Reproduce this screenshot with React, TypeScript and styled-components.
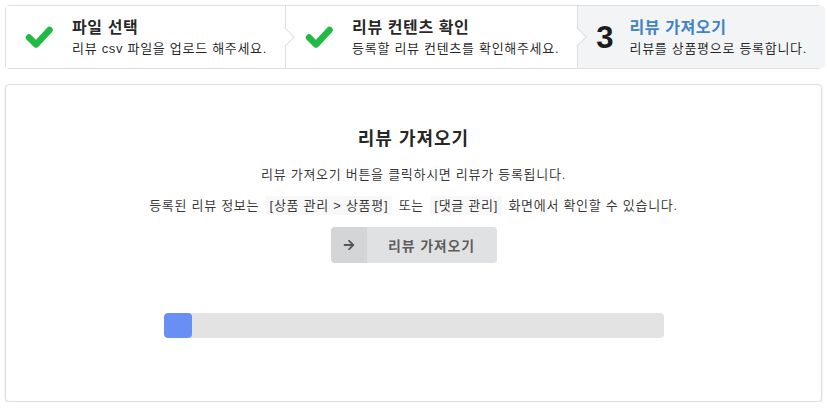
import React from 'react';
import styled, { createGlobalStyle } from 'styled-components';
import { FaArrowRight } from 'react-icons/fa';

const GlobalStyle = createGlobalStyle`
  html, body {
    margin: 0;
    padding: 0;
    background: #ffffff;
  }
  body {
    font-family: "Liberation Sans", "Noto Sans CJK KR", sans-serif;
    font-size: 13px;
    color: rgba(0, 0, 0, 0.87);
  }
`;

const Page = styled.div`
  padding: 5px 5px 0 5px;
  display: flex;
  flex-direction: column;
  gap: 15px;
`;

const Steps = styled.div`
  display: flex;
  height: 64px;
  box-sizing: border-box;
  border: 1px solid rgba(34, 36, 38, 0.15);
  border-radius: 4px;
`;

const Step = styled.div<{ active?: boolean; last?: boolean }>`
  position: relative;
  flex: 1 0 auto;
  display: flex;
  align-items: center;
  justify-content: center;
  gap: 18px;
  padding: 0 18px;
  background: ${p => (p.active ? '#f3f4f5' : '#ffffff')};
  border-right: ${p => (p.last ? 'none' : '1px solid rgba(34, 36, 38, 0.15)')};
  border-radius: ${p => (p.last ? '0 3px 3px 0' : '0')};

  ${p => !p.last && `
    &::after {
      content: '';
      position: absolute;
      z-index: 2;
      top: 50%;
      right: 0;
      width: 13px;
      height: 13px;
      background: #ffffff;
      border-style: solid;
      border-color: rgba(34, 36, 38, 0.15);
      border-width: 0 1px 1px 0;
      transform: translateY(-50%) translateX(50%) rotate(-45deg);
    }
  `}
`;

const CheckIcon = styled.svg`
  width: 30px;
  height: 26px;
  flex: none;
`;

const StepNumber = styled.div`
  font-family: "Liberation Sans", Arial, sans-serif;
  font-size: 31px;
  font-weight: 700;
  color: #1b1c1d;
  line-height: 1;
  margin-right: -2px;
`;

const StepText = styled.div`
  display: flex;
  flex-direction: column;
  gap: 2px;
`;

const StepTitle = styled.div<{ active?: boolean }>`
  font-size: 16px;
  font-weight: 700;
  line-height: 20px;
  letter-spacing: 0.6px;
  color: ${p => (p.active ? '#4183c4' : 'rgba(0, 0, 0, 0.87)')};
`;

const StepDesc = styled.div`
  font-size: 13px;
  line-height: 17px;
  letter-spacing: 0.7px;
  color: rgba(0, 0, 0, 0.87);
`;

const Segment = styled.div`
  height: 318px;
  box-sizing: border-box;
  border: 1px solid rgba(34, 36, 38, 0.15);
  border-radius: 4px;
  box-shadow: 0 1px 2px 0 rgba(34, 36, 38, 0.15);
  display: flex;
  flex-direction: column;
  align-items: center;
  padding-top: 42px;
`;

const Heading = styled.h3`
  margin: 0;
  font-size: 18px;
  font-weight: 700;
  line-height: 24px;
  letter-spacing: 1px;
  color: rgba(0, 0, 0, 0.87);
`;

const Line = styled.p<{ top: number }>`
  margin: ${p => p.top}px 0 0 0;
  font-size: 13px;
  line-height: 20px;
  letter-spacing: 0.72px;
  color: rgba(0, 0, 0, 0.8);
`;

const Code = styled.span`
  background: #f8f8f8;
  padding: 2px 4px;
  margin: 0 2px;
`;

const Button = styled.button`
  margin-top: 11px;
  display: flex;
  align-items: stretch;
  height: 36px;
  width: 166px;
  padding: 0;
  border: none;
  border-radius: 4px;
  background: #e0e1e2;
  color: rgba(0, 0, 0, 0.6);
  font-family: inherit;
  font-size: 14px;
  font-weight: 700;
  letter-spacing: 0.8px;
  overflow: hidden;
  cursor: pointer;
`;

const ButtonIcon = styled.span`
  width: 36px;
  display: flex;
  align-items: center;
  justify-content: center;
  background: rgba(0, 0, 0, 0.05);
  color: #555555;
`;

const ButtonLabel = styled.span`
  flex: 1;
  display: flex;
  align-items: center;
  justify-content: center;
`;

const Progress = styled.div`
  margin-top: 50px;
  width: 500px;
  height: 25px;
  border-radius: 4px;
  background: #e3e3e3;
  overflow: hidden;
`;

const Bar = styled.div`
  height: 100%;
  background: #6a8ff4;
  border-radius: 4px;
`;

const Check = () => (
  <CheckIcon viewBox="0 0 30 26">
    <polyline
      points="5,13.5 12,20.5 25.5,6"
      fill="none"
      stroke="#21ba45"
      strokeWidth={6.5}
      strokeLinecap="round"
      strokeLinejoin="round"
    />
  </CheckIcon>
);

const App: React.FC = () => {
  const percent = 5.6;

  return (
    <>
      <GlobalStyle />
      <Page>
        <Steps>
          <Step>
            <Check />
            <StepText>
              <StepTitle>파일 선택</StepTitle>
              <StepDesc>리뷰 csv 파일을 업로드 해주세요.</StepDesc>
            </StepText>
          </Step>
          <Step>
            <Check />
            <StepText>
              <StepTitle>리뷰 컨텐츠 확인</StepTitle>
              <StepDesc>등록할 리뷰 컨텐츠를 확인해주세요.</StepDesc>
            </StepText>
          </Step>
          <Step active last>
            <StepNumber>3</StepNumber>
            <StepText>
              <StepTitle active>리뷰 가져오기</StepTitle>
              <StepDesc>리뷰를 상품평으로 등록합니다.</StepDesc>
            </StepText>
          </Step>
        </Steps>

        <Segment>
          <Heading>리뷰 가져오기</Heading>
          <Line top={14}>리뷰 가져오기 버튼을 클릭하시면 리뷰가 등록됩니다.</Line>
          <Line top={11}>
            등록된 리뷰 정보는 <Code>[상품 관리 &gt; 상품평]</Code> 또는 <Code>[댓글 관리]</Code> 화면에서 확인할 수 있습니다.
          </Line>
          <Button>
            <ButtonIcon>
              <FaArrowRight size={12} />
            </ButtonIcon>
            <ButtonLabel>리뷰 가져오기</ButtonLabel>
          </Button>
          <Progress>
            <Bar style={{ width: `${percent}%` }} />
          </Progress>
        </Segment>
      </Page>
    </>
  );
};

export default App;
